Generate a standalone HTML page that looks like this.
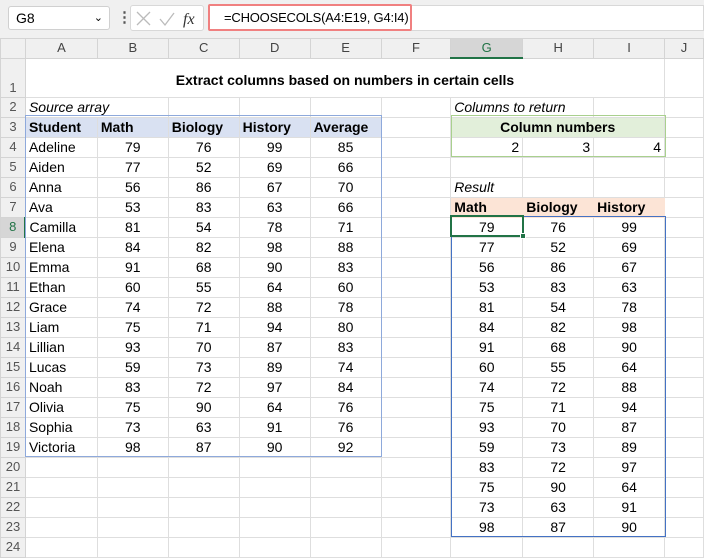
<!DOCTYPE html>
<html><head><meta charset="utf-8"><style>
*{box-sizing:border-box;margin:0;padding:0}
body{width:704px;height:557px;overflow:hidden;background:#fff;font-family:"Liberation Sans",sans-serif;font-size:14px;color:#000;position:relative}
.top{position:absolute;left:0;top:0;width:704px;height:38px;background:#f0f0f0}
.abs{position:absolute}
table{position:absolute;left:0;top:38px;border-collapse:collapse;table-layout:fixed}
td{border:1px solid #dedede;padding:0 3px;white-space:nowrap;overflow:visible;height:20px;line-height:18px}
tr.h td{background:#f0f0f0;color:#444;text-align:center;height:19px;font-size:13px;border-color:#d4d4d4}
td.rh{background:#f0f0f0;color:#555;text-align:center;font-size:13px;padding:0;border-color:#d4d4d4}
.c{text-align:center}.r{text-align:right}.b{font-weight:bold}.i{font-style:italic}
.sh td.s{background:#d9e1f2;font-weight:bold}
</style></head><body>
<div class="top"></div>
<div class="abs" style="left:8px;top:6px;width:102px;height:24px;background:#fff;border:1px solid #d0d0d0;border-radius:3px;font-size:14px;line-height:22px;padding-left:7px">G8<span style="position:absolute;right:6px;top:0;font-size:11px">&#8964;</span></div>
<div class="abs" style="left:117px;top:8px;font-size:15px;color:#555;font-weight:bold">&#8942;</div>
<div class="abs" style="left:130px;top:5px;width:74px;height:26px;background:#fff;border:1px solid #d8d8d8;border-radius:3px"></div>
<svg class="abs" style="left:136px;top:10px" width="64" height="18"><path d="M1 2 L14 15 M14 2 L1 15" stroke="#bbb" stroke-width="1.3" fill="none"/><path d="M24 9 L29 15 L38 3" stroke="#bbb" stroke-width="1.3" fill="none"/><text x="47" y="14" font-family="Liberation Serif" font-style="italic" font-size="16" fill="#333">fx</text></svg>
<div class="abs" style="left:209px;top:5px;width:495px;height:26px;background:#fff;border:1px solid #d8d8d8"></div>
<div class="abs" style="left:208px;top:4px;width:204px;height:27px;border:2px solid #f08080;border-radius:2px;font-size:13px;line-height:23px;padding-left:14px;white-space:nowrap;letter-spacing:-0.2px">=CHOOSECOLS(A4:E19, G4:I4)</div>
<table>
<colgroup><col style="width:25px"><col style="width:72px"><col style="width:71px"><col style="width:71px"><col style="width:71px"><col style="width:71px"><col style="width:70px"><col style="width:72px"><col style="width:71px"><col style="width:71px"><col style="width:39px"></colgroup>
<tr class="h"><td style="background:#f0f0f0"></td><td>A</td><td>B</td><td>C</td><td>D</td><td>E</td><td>F</td><td style="background:#d6d6d6;color:#217346;border-bottom:2px solid #217346">G</td><td>H</td><td>I</td><td>J</td></tr>
<tr><td class="rh" style="height:39px;vertical-align:bottom;line-height:18px">1</td><td colspan="9" class="c b" style="height:39px;font-size:14px;padding-top:4px">Extract columns based on numbers in certain cells</td><td></td></tr>
<tr><td class="rh">2</td><td class="i" colspan="2" style="border-right-color:#dedede">Source array</td><td></td><td></td><td></td><td></td><td class="i" colspan="2">Columns to return</td><td></td><td></td></tr>
<tr class="sh"><td class="rh">3</td><td class="s">Student</td><td class="s">Math</td><td class="s">Biology</td><td class="s">History</td><td class="s">Average</td><td></td><td colspan="3" class="c b" style="background:#e2efda">Column numbers</td><td></td></tr>
<tr><td class="rh">4</td><td>Adeline</td><td class="c">79</td><td class="c">76</td><td class="c">99</td><td class="c">85</td><td></td><td class="r">2</td><td class="r">3</td><td class="r">4</td><td></td></tr>
<tr><td class="rh">5</td><td>Aiden</td><td class="c">77</td><td class="c">52</td><td class="c">69</td><td class="c">66</td><td></td><td></td><td></td><td></td><td></td></tr>
<tr><td class="rh">6</td><td>Anna</td><td class="c">56</td><td class="c">86</td><td class="c">67</td><td class="c">70</td><td></td><td class="i">Result</td><td></td><td></td><td></td></tr>
<tr><td class="rh">7</td><td>Ava</td><td class="c">53</td><td class="c">83</td><td class="c">63</td><td class="c">66</td><td></td><td class="b" style="background:#fce4d6;border-color:#fce4d6">Math</td><td class="b" style="background:#fce4d6;border-color:#fce4d6">Biology</td><td class="b" style="background:#fce4d6;border-color:#fce4d6">History</td><td></td></tr>
<tr><td class="rh" style="background:#d6d6d6;color:#217346;border-right:2px solid #217346">8</td><td>Camilla</td><td class="c">81</td><td class="c">54</td><td class="c">78</td><td class="c">71</td><td></td><td class="c">79</td><td class="c">76</td><td class="c">99</td><td></td></tr>
<tr><td class="rh">9</td><td>Elena</td><td class="c">84</td><td class="c">82</td><td class="c">98</td><td class="c">88</td><td></td><td class="c">77</td><td class="c">52</td><td class="c">69</td><td></td></tr>
<tr><td class="rh">10</td><td>Emma</td><td class="c">91</td><td class="c">68</td><td class="c">90</td><td class="c">83</td><td></td><td class="c">56</td><td class="c">86</td><td class="c">67</td><td></td></tr>
<tr><td class="rh">11</td><td>Ethan</td><td class="c">60</td><td class="c">55</td><td class="c">64</td><td class="c">60</td><td></td><td class="c">53</td><td class="c">83</td><td class="c">63</td><td></td></tr>
<tr><td class="rh">12</td><td>Grace</td><td class="c">74</td><td class="c">72</td><td class="c">88</td><td class="c">78</td><td></td><td class="c">81</td><td class="c">54</td><td class="c">78</td><td></td></tr>
<tr><td class="rh">13</td><td>Liam</td><td class="c">75</td><td class="c">71</td><td class="c">94</td><td class="c">80</td><td></td><td class="c">84</td><td class="c">82</td><td class="c">98</td><td></td></tr>
<tr><td class="rh">14</td><td>Lillian</td><td class="c">93</td><td class="c">70</td><td class="c">87</td><td class="c">83</td><td></td><td class="c">91</td><td class="c">68</td><td class="c">90</td><td></td></tr>
<tr><td class="rh">15</td><td>Lucas</td><td class="c">59</td><td class="c">73</td><td class="c">89</td><td class="c">74</td><td></td><td class="c">60</td><td class="c">55</td><td class="c">64</td><td></td></tr>
<tr><td class="rh">16</td><td>Noah</td><td class="c">83</td><td class="c">72</td><td class="c">97</td><td class="c">84</td><td></td><td class="c">74</td><td class="c">72</td><td class="c">88</td><td></td></tr>
<tr><td class="rh">17</td><td>Olivia</td><td class="c">75</td><td class="c">90</td><td class="c">64</td><td class="c">76</td><td></td><td class="c">75</td><td class="c">71</td><td class="c">94</td><td></td></tr>
<tr><td class="rh">18</td><td>Sophia</td><td class="c">73</td><td class="c">63</td><td class="c">91</td><td class="c">76</td><td></td><td class="c">93</td><td class="c">70</td><td class="c">87</td><td></td></tr>
<tr><td class="rh">19</td><td>Victoria</td><td class="c">98</td><td class="c">87</td><td class="c">90</td><td class="c">92</td><td></td><td class="c">59</td><td class="c">73</td><td class="c">89</td><td></td></tr>
<tr><td class="rh">20</td><td></td><td></td><td></td><td></td><td></td><td></td><td class="c">83</td><td class="c">72</td><td class="c">97</td><td></td></tr>
<tr><td class="rh">21</td><td></td><td></td><td></td><td></td><td></td><td></td><td class="c">75</td><td class="c">90</td><td class="c">64</td><td></td></tr>
<tr><td class="rh">22</td><td></td><td></td><td></td><td></td><td></td><td></td><td class="c">73</td><td class="c">63</td><td class="c">91</td><td></td></tr>
<tr><td class="rh">23</td><td></td><td></td><td></td><td></td><td></td><td></td><td class="c">98</td><td class="c">87</td><td class="c">90</td><td></td></tr>
<tr><td class="rh">24</td><td></td><td></td><td></td><td></td><td></td><td></td><td></td><td></td><td></td><td></td></tr>
</table>
<div class="abs" style="left:25px;top:115px;width:357px;height:342px;border:1px solid #8ea9db"></div>
<div class="abs" style="left:451px;top:115px;width:215px;height:42px;border:1px solid #a9d08e"></div>
<div class="abs" style="left:451px;top:216px;width:215px;height:321px;border:1px solid #4472c4"></div>
<div class="abs" style="left:450px;top:215px;width:74px;height:22px;border:2px solid #217346"></div>
<div class="abs" style="left:520px;top:233px;width:6px;height:6px;background:#217346;border:1px solid #fff"></div>
</body></html>
